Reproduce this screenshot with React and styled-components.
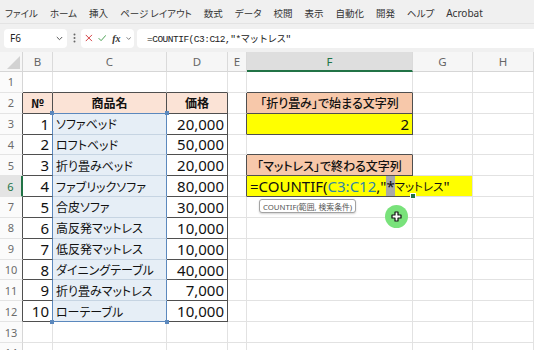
import React from "react";
import styled, { createGlobalStyle, css } from "styled-components";

const GRID = "#e2e2e2";
const DARK = "#4f4f4f";
const BLUE = "#5b88bd";
const RANGE = "#e6eef6";
const RANGE_LINE = "#c6d4e2";
const PEACH = "#f7c8aa";
const PEACH_LIGHT = "#fbe3d6";
const YELLOW = "#ffff00";
const EXCEL_GREEN = "#217346";

const GlobalStyle = createGlobalStyle`
  html, body {
    margin: 0;
    padding: 0;
    background: #fff;
  }
  body {
    width: 534px;
    height: 350px;
    overflow: hidden;
    font-family: "Noto Sans", "Noto Sans CJK JP", sans-serif;
  }
`;

const Frame = styled.div`
  position: relative;
  width: 534px;
  height: 350px;
  overflow: hidden;
  display: flex;
  flex-direction: column;
  background: #f0f0f0;
  & > * {
    flex-shrink: 0;
  }
`;

const MenuBar = styled.div`
  box-sizing: border-box;
  height: 24px;
  display: flex;
  align-items: center;
  gap: 12px;
  padding: 3px 0 0 5px;
  border-bottom: 1px solid #e3e3e3;
  font-family: "Noto Sans CJK JP", sans-serif;
  font-size: 9.5px;
  font-feature-settings: "palt";
  color: #333;
`;

const MenuItem = styled.span`
  ${p =>
    p.$latin &&
    css`
      font-family: "Noto Sans", sans-serif;
      font-size: 10px;
    `};
`;

const FormulaRow = styled.div`
  box-sizing: border-box;
  height: 28px;
  display: flex;
  align-items: center;
  padding-left: 4px;
`;

const Box = styled.div`
  box-sizing: border-box;
  height: 19px;
  display: flex;
  align-items: center;
  background: #fff;
  border-radius: 4px;
`;

const NameBox = styled(Box)`
  width: 63px;
  justify-content: space-between;
  padding: 0 4px 0 6px;
  font-size: 10px;
  color: #222;
`;

const Dots = styled.div`
  width: 14px;
  display: flex;
  justify-content: center;
`;

const FnBox = styled(Box)`
  width: 53px;
  padding: 0 3px 0 4px;
  gap: 5px;
`;

const Fx = styled.span`
  font-family: "Liberation Serif", serif;
  font-style: italic;
  font-weight: 700;
  font-size: 10px;
  color: #333;
  margin-left: 1px;
`;

const FormulaInput = styled(Box)`
  flex: 1;
  margin-left: 3px;
  border-radius: 4px 0 0 4px;
  padding-left: 10px;
  font-family: "Liberation Mono", "Noto Sans CJK JP", monospace;
  font-size: 9.5px;
  letter-spacing: -0.5px;
  color: #222;
`;

const Sheet = styled.div`
  display: grid;
  grid-template-columns: 23px 30px 114px 61px 19px 166px 60px 61px;
  grid-template-rows: 20px repeat(14, 20.85px);
  background: #fff;
`;

const Corner = styled.div`
  position: relative;
  box-sizing: border-box;
  background: #f6f6f6;
  border-right: 1px solid #d6d6d6;
  border-bottom: 1px solid #d6d6d6;
  &::after {
    content: "";
    position: absolute;
    right: 2px;
    bottom: 2px;
    border-style: solid;
    border-width: 0 0 13px 13px;
    border-color: transparent transparent #d2d2d2 transparent;
  }
`;

const ColHead = styled.div`
  box-sizing: border-box;
  display: flex;
  align-items: center;
  justify-content: center;
  background: ${p => (p.$active ? "#dedede" : "#f6f6f6")};
  color: ${p => (p.$active ? EXCEL_GREEN : "#666")};
  border-right: 1px solid #dadada;
  border-bottom: ${p => (p.$active ? `2px solid ${EXCEL_GREEN}` : "1px solid #d6d6d6")};
  font-size: 11.5px;
`;

const RowHead = styled.div`
  box-sizing: border-box;
  display: flex;
  align-items: center;
  justify-content: center;
  background: ${p => (p.$active ? "#e4e4e4" : "#fbfbfb")};
  color: ${p => (p.$active ? EXCEL_GREEN : "#6b6b6b")};
  border-right: ${p => (p.$active ? `2px solid ${EXCEL_GREEN}` : `1px solid ${p.$edge || "#d6d6d6"}`)};
  border-bottom: 1px solid #e4e4e4;
  font-size: 11px;
`;

const JUSTIFY = { left: "flex-start", center: "center", right: "flex-end" };

const Cell = styled.div`
  position: relative;
  box-sizing: border-box;
  display: flex;
  align-items: center;
  justify-content: ${p => JUSTIFY[p.$align || "left"]};
  padding: 0 3px;
  background: ${p => p.$fill || "#fff"};
  border-right: 1px solid ${p => p.$r || GRID};
  border-bottom: 1px solid ${p => p.$b || GRID};
  grid-column: ${p => (p.$span ? `span ${p.$span}` : "auto")};
  white-space: nowrap;
  color: #111;
  font-size: 15px;
  font-weight: ${p => p.$weight || 400};
  ${p =>
    p.$jp &&
    css`
      font-family: "Noto Sans CJK JP", sans-serif;
      font-size: 12px;
      font-feature-settings: "palt";
    `};
`;

const EditCell = styled(Cell)`
  overflow: visible;
  z-index: 2;
  &::after {
    content: "";
    position: absolute;
    left: 0;
    bottom: -1px;
    width: 166px;
    height: 1px;
    background: ${DARK};
  }
`;

const Handle = styled.span`
  position: absolute;
  width: 4px;
  height: 4px;
  background: ${BLUE};
  z-index: 3;
  ${p => (p.$top ? "top: -3px;" : "bottom: -3px;")}
  ${p => (p.$left ? "left: -3px;" : "right: -3px;")}
`;

const Ref = styled.span`
  color: #2f86a6;
`;

const Sel = styled.span`
  background: #a9a9a9;
`;

const JpText = styled.span`
  font-family: "Noto Sans CJK JP", sans-serif;
  font-size: 11.5px;
  font-feature-settings: "palt";
`;

const FillHandle = styled.span`
  position: absolute;
  left: 163px;
  bottom: -3px;
  width: 4px;
  height: 4px;
  background: ${EXCEL_GREEN};
  border: 1px solid #fff;
  z-index: 3;
`;

const Tip = styled.div`
  position: absolute;
  left: 12px;
  top: 23px;
  height: 12px;
  display: flex;
  align-items: center;
  padding: 0 3px;
  background: #fff;
  border: 1px solid #a3a3a3;
  border-radius: 3px;
  box-shadow: 0 1px 2px rgba(0, 0, 0, 0.18);
  font-family: "Noto Sans", "Noto Sans CJK JP", sans-serif;
  font-size: 7.8px;
  color: #555;
  white-space: nowrap;
`;

const Pointer = styled.div`
  position: absolute;
  left: 385px;
  top: 205px;
  width: 23px;
  height: 23px;
  border-radius: 50%;
  background: #79e27b;
  display: flex;
  align-items: center;
  justify-content: center;
  z-index: 5;
`;

const products = [
  ["ソファベッド", "20,000"],
  ["ロフトベッド", "50,000"],
  ["折り畳みベッド", "20,000"],
  ["ファブリックソファ", "80,000"],
  ["合皮ソファ", "30,000"],
  ["高反発マットレス", "10,000"],
  ["低反発マットレス", "10,000"],
  ["ダイニングテーブル", "40,000"],
  ["折り畳みマットレス", "7,000"],
  ["ローテーブル", "10,000"]
];

const COLS = ["B", "C", "D", "E", "F", "G", "H"];
const ROWS = Array.from({ length: 14 }, (_, i) => i + 1);
const MENU = ["ファイル", "ホーム", "挿入", "ページ レイアウト", "数式", "データ", "校閲", "表示", "自動化", "開発", "ヘルプ"];

function cellProps(r, c) {
  const p = {};
  const inTable = r >= 2 && r <= 12;
  if (c === "B" || c === "C" || c === "D") {
    if (r === 1) p.$b = DARK;
    if (inTable) {
      p.$r = DARK;
      p.$b = DARK;
    }
    if (r === 2) p.$fill = PEACH_LIGHT;
    if (c === "B" && r >= 3 && r <= 12) p.$r = BLUE;
    if (c === "C" && r === 2) p.$b = BLUE;
    if (c === "C" && r >= 3 && r <= 12) {
      p.$fill = RANGE;
      p.$r = BLUE;
      p.$b = r === 12 ? BLUE : RANGE_LINE;
    }
  }
  if (c === "E" && [2, 3, 5, 6].includes(r)) p.$r = DARK;
  if (c === "F") {
    if (r === 1 || r === 4) p.$b = DARK;
    if (r === 2 || r === 5) {
      p.$fill = PEACH;
      p.$r = DARK;
      p.$b = DARK;
    }
    if (r === 3) {
      p.$fill = YELLOW;
      p.$r = DARK;
      p.$b = DARK;
    }
  }
  return p;
}

function cellContent(r, c) {
  const item = products[r - 3];
  if (c === "B") {
    if (r === 2) return { $jp: true, $align: "center", $weight: 700, text: "№" };
    if (item) return { $align: "right", text: String(r - 2) };
  }
  if (c === "C") {
    if (r === 2) return { $jp: true, $align: "center", $weight: 700, text: "商品名" };
    if (item) return { $jp: true, text: item[0] };
  }
  if (c === "D") {
    if (r === 2) return { $jp: true, $align: "center", $weight: 700, text: "価格" };
    if (item) return { $align: "right", text: item[1] };
  }
  if (c === "F") {
    if (r === 2) return { $jp: true, $align: "center", $weight: 500, text: "「折り畳み」で始まる文字列" };
    if (r === 3) return { $align: "right", text: "2" };
    if (r === 5) return { $jp: true, $align: "center", $weight: 500, text: "「マットレス」で終わる文字列" };
  }
  return { text: "" };
}

const Chevron = () => (
  <svg width="7" height="5" viewBox="0 0 7 5">
    <path d="M0.8 1 L3.5 3.7 L6.2 1" fill="none" stroke="#555" strokeWidth="1" />
  </svg>
);

const App = () => {
  const cells = [];
  cells.push(<Corner key="corner" />);
  COLS.forEach(c => cells.push(<ColHead key={`h${c}`} $active={c === "F"}>{c}</ColHead>));

  ROWS.forEach(r => {
    const edge = r >= 2 && r <= 12 ? DARK : null;
    cells.push(
      <RowHead key={`r${r}`} $active={r === 6} $edge={edge}>
        {r}
      </RowHead>
    );
    COLS.forEach(c => {
      if (r === 6 && c === "G") return;
      const key = `${c}${r}`;
      if (r === 6 && c === "F") {
        cells.push(
          <EditCell key={key} $span={2} $fill={YELLOW}>
            =COUNTIF(<Ref>C3:C12</Ref>,"<Sel>*</Sel>
            <JpText>マットレス</JpText>"
            <FillHandle />
            <Tip>COUNTIF(範囲, 検索条件)</Tip>
          </EditCell>
        );
        return;
      }
      const { text, ...rest } = cellContent(r, c);
      cells.push(
        <Cell key={key} {...cellProps(r, c)} {...rest}>
          {text}
          {c === "C" && r === 3 && (
            <>
              <Handle $top $left />
              <Handle $top />
            </>
          )}
          {c === "C" && r === 12 && (
            <>
              <Handle $left />
              <Handle />
            </>
          )}
        </Cell>
      );
    });
  });

  return (
    <>
      <GlobalStyle />
      <Frame>
        <MenuBar>
          {MENU.map(m => (
            <MenuItem key={m}>{m}</MenuItem>
          ))}
          <MenuItem $latin>Acrobat</MenuItem>
        </MenuBar>
        <FormulaRow>
          <NameBox>
            F6
            <Chevron />
          </NameBox>
          <Dots>
            <svg width="3" height="10" viewBox="0 0 3 10">
              <circle cx="1.5" cy="1.5" r="1" fill="#666" />
              <circle cx="1.5" cy="5" r="1" fill="#666" />
              <circle cx="1.5" cy="8.5" r="1" fill="#666" />
            </svg>
          </Dots>
          <FnBox>
            <svg width="10" height="10" viewBox="0 0 10 10">
              <path d="M1 1 L9 9 M9 1 L1 9" stroke="#d13438" strokeWidth="1.2" />
            </svg>
            <svg width="11" height="10" viewBox="0 0 11 10">
              <path d="M0.8 5.2 L4 8.4 L10.2 1.5" fill="none" stroke="#3f9b47" strokeWidth="1.2" />
            </svg>
            <Fx>fx</Fx>
            <Chevron />
          </FnBox>
          <FormulaInput>=COUNTIF(C3:C12,"*マットレス"</FormulaInput>
        </FormulaRow>
        <Sheet>{cells}</Sheet>
        <Pointer>
          <svg width="11" height="11" viewBox="0 0 11 11">
            <path
              d="M4 1 H7 V4 H10 V7 H7 V10 H4 V7 H1 V4 H4 Z"
              fill="#fff"
              stroke="#111"
              strokeWidth="1.2"
              strokeLinejoin="round"
            />
          </svg>
        </Pointer>
      </Frame>
    </>
  );
};

export default App;
